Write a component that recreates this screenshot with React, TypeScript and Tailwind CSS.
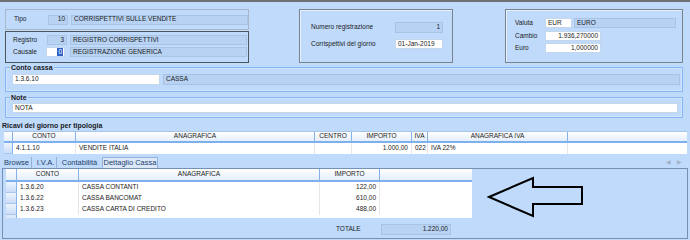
import React from "react";

type FProps = {
  w: number;
  h?: number;
  white?: boolean;
  right?: boolean;
  children?: React.ReactNode;
  extra?: string;
};

function Fld({ w, h = 10, white, right, children, extra = "" }: FProps) {
  return (
    <div
      className={
        "flex items-center px-[2px] border whitespace-nowrap overflow-hidden " +
        (white ? "bg-white border-[#c4d6ec] " : "bg-[#b7d2f2] border-[#a8c3e4] ") +
        (right ? "justify-end " : "justify-start ") +
        extra
      }
      style={{ width: w, height: h }}
    >
      {children}
    </div>
  );
}

function HCell({ w, children, last }: { w: number; children?: React.ReactNode; last?: boolean }) {
  return (
    <div
      className={
        "h-full flex items-center justify-center bg-linear-to-b from-[#ffffff] to-[#e4eefb] border-b-2 border-b-[#7fb0ee] " +
        (last ? "" : "border-r border-r-[#86b2ec]")
      }
      style={{ width: w }}
    >
      {children}
    </div>
  );
}

function RCell({ w, children, right, last }: { w: number; children?: React.ReactNode; right?: boolean; last?: boolean }) {
  return (
    <div
      className={
        "h-full flex items-center px-[3px] bg-white whitespace-nowrap overflow-hidden " +
        (right ? "justify-end " : "justify-start ") +
        (last ? "" : "border-r border-r-[#e6e6e6]")
      }
      style={{ width: w }}
    >
      {children}
    </div>
  );
}

function Ind({ w }: { w: number }) {
  return (
    <div
      className="h-full bg-linear-to-b from-[#eef4fd] to-[#c9dcf6] border-r border-r-[#86b2ec] border-b border-b-[#a9c6ee]"
      style={{ width: w }}
    />
  );
}

export default function App() {
  const g1 = [9, 63, 239, 37, 60, 16, 140, 119];
  const g2 = [11, 62, 241, 60, 92];
  const rows2 = [
    ["1.3.6.20", "CASSA CONTANTI", "122,00"],
    ["1.3.6.22", "CASSA BANCOMAT", "610,00"],
    ["1.3.6.23", "CASSA CARTA DI CREDITO", "488,00"],
  ];
  return (
    <div className="w-[690px] h-[240px] bg-[#bfdafb] overflow-hidden text-[6.5px] leading-none text-[#1b1b1b] font-['Liberation_Sans',Arial,sans-serif]">
      <div className="h-[2px] bg-[#6d7176]" />
      {/* top row */}
      <div className="mt-[7px] pl-[5px] flex items-start">
        <div className="w-[244px] flex flex-col gap-[1px]">
          <div className="h-[21px] border border-[#a8b6c6] flex items-center pl-[8px]">
            <div className="w-[34px]">Tipo</div>
            <Fld w={20} right>10</Fld>
            <div className="w-[3px]" />
            <Fld w={177}>CORRISPETTIVI SULLE VENDITE</Fld>
          </div>
          <div className="h-[32px] border border-[#4e5761] pt-[3px] pl-[7px] flex flex-col gap-[2px]">
            <div className="flex items-center h-[10px]">
              <div className="w-[34px]">Registro</div>
              <Fld w={20} right>3</Fld>
              <div className="w-[3px]" />
              <Fld w={177}>REGISTRO CORRISPETTIVI</Fld>
            </div>
            <div className="flex items-center h-[10px]">
              <div className="w-[33px]">Causale</div>
              <div className="w-[19px] h-[10px] bg-white border border-[#c4d6ec] flex items-center justify-end">
                <span className="bg-[#2f62c8] text-white h-[8px] px-[1px] flex items-center mr-[1px]">0</span>
              </div>
              <div className="w-[5px]" />
              <Fld w={177}>REGISTRAZIONE GENERICA</Fld>
            </div>
          </div>
        </div>
        <div className="ml-[50px] w-[154px] h-[54px] border border-[#79828d] shadow-[inset_1px_1px_0_#e4efff] pl-[11px] pt-[12px] flex flex-col gap-[6px]">
          <div className="flex items-center h-[11px]">
            <div className="w-[84px]">Numero registrazione</div>
            <Fld w={48} h={11} right>1</Fld>
          </div>
          <div className="flex items-center h-[10px]">
            <div className="w-[84px]">Corrispettivi del giorno</div>
            <Fld w={48} white extra="justify-center">01-Jan-2019</Fld>
          </div>
        </div>
        <div className="ml-[52px] w-[178px] h-[54px] border border-[#79828d] shadow-[inset_1px_1px_0_#e4efff] pl-[9px] pt-[8px] flex flex-col">
          <div className="flex items-center h-[10px]">
            <div className="w-[30px]">Valuta</div>
            <Fld w={27} white>EUR</Fld>
            <div className="w-[2px]" />
            <Fld w={102}>EURO</Fld>
          </div>
          <div className="flex items-center h-[10px] mt-[3px]">
            <div className="w-[30px]">Cambio</div>
            <Fld w={56} white right>1.936,270000</Fld>
          </div>
          <div className="flex items-center h-[10px] mt-[2px]">
            <div className="w-[30px]">Euro</div>
            <Fld w={56} white right>1,000000</Fld>
          </div>
        </div>
      </div>

      {/* Conto cassa */}
      <div className="relative mt-[4px] ml-[5px] w-[678px] h-[25px] border border-[#86b5f3] shadow-[inset_0_0_0_1px_#d2e5fd] pl-[6px] pt-[6px] flex items-start gap-[3px]">
        <div className="absolute -top-[4px] left-[4px] px-[1px] bg-[#bfdafb] font-bold text-[7px] leading-[7px]">Conto cassa</div>
        <Fld w={148} h={11} white>1.3.6.10</Fld>
        <Fld w={517} h={11}>CASSA</Fld>
      </div>

      {/* Note */}
      <div className="relative mt-[5px] ml-[5px] w-[678px] h-[21px] border border-[#86b5f3] shadow-[inset_0_0_0_1px_#d2e5fd] pl-[6px] pt-[5px]">
        <div className="absolute -top-[4px] left-[4px] px-[1px] bg-[#bfdafb] font-bold text-[7px] leading-[7px]">Note</div>
        <Fld w={666} white>NOTA</Fld>
      </div>

      <div className="mt-[3px] ml-[2px] h-[9px] flex items-center font-bold text-[7px]">Ricavi del giorno per tipologia</div>

      {/* Grid 1 */}
      <div className="mt-[1px] ml-[4px] w-[683px] border-t border-[#a9c5ea]">
        <div className="flex h-[11px]">
          <HCell w={g1[0]} />
          <HCell w={g1[1]}>CONTO</HCell>
          <HCell w={g1[2]}>ANAGRAFICA</HCell>
          <HCell w={g1[3]}>CENTRO</HCell>
          <HCell w={g1[4]}>IMPORTO</HCell>
          <HCell w={g1[5]}>IVA</HCell>
          <HCell w={g1[6]}>ANAGRAFICA IVA</HCell>
          <HCell w={g1[7]} last />
        </div>
        <div className="flex h-[11px]">
          <Ind w={g1[0]} />
          <RCell w={g1[1]}>4.1.1.10</RCell>
          <RCell w={g1[2]}>VENDITE ITALIA</RCell>
          <RCell w={g1[3]} />
          <RCell w={g1[4]} right>1.000,00</RCell>
          <RCell w={g1[5]}>022</RCell>
          <RCell w={g1[6]}>IVA 22%</RCell>
          <RCell w={g1[7]} last />
        </div>
      </div>

      {/* Tabs */}
      <div className="mt-[3px] h-[11px] flex items-end text-[7.5px] text-[#23406a]">
        <div className="ml-[2px] w-[30px] h-[11px] flex items-center justify-center border-r border-[#94b2d6]">Browse</div>
        <div className="w-[25px] h-[11px] flex items-center justify-center border-r border-[#94b2d6] pl-[3px]">I.V.A.</div>
        <div className="w-[45px] h-[11px] flex items-center justify-center">Contabilità</div>
        <div className="w-[56px] h-[11px] flex items-center justify-center bg-[#dbe8fa] border border-b-0 border-[#93b4dc]">Dettaglio Cassa</div>
        <div className="flex-1" />
        <div className="flex gap-[6px] mr-[8px] mb-[3px] text-[#a3b3c6] text-[6px]">
          <span>◀</span>
          <span>▶</span>
        </div>
      </div>

      {/* Panel */}
      <div className="ml-[2px] w-[686px] h-[71px] border border-[#7490b4] pl-[3px]">
        <div className="flex items-start">
          <div className="w-[466px] h-[49px] bg-white flex flex-col">
            <div className="flex h-[13px]">
              <HCell w={g2[0]} />
              <HCell w={g2[1]}>CONTO</HCell>
              <HCell w={g2[2]}>ANAGRAFICA</HCell>
              <HCell w={g2[3]}>IMPORTO</HCell>
              <HCell w={g2[4]} last />
            </div>
            {rows2.map((r) => (
              <div key={r[0]} className="flex h-[11px]">
                <Ind w={g2[0]} />
                <RCell w={g2[1]}>{r[0]}</RCell>
                <RCell w={g2[2]}>{r[1]}</RCell>
                <RCell w={g2[3]} right>{r[2]}</RCell>
                <RCell w={g2[4]} last />
              </div>
            ))}
            <div className="flex h-[3px]">
              <div className="w-[11px] h-full bg-[#dde9f9] border-r border-r-[#86b2ec]" />
            </div>
          </div>
          <svg width="110" height="46" viewBox="0 0 110 46" className="ml-[8px] mt-[4px]">
            <polygon
              points="9,24 53,5 53,14 102,14 102,31 53,31 53,43"
              fill="none"
              stroke="#000"
              strokeWidth="2"
              strokeLinejoin="miter"
            />
          </svg>
        </div>
        <div className="mt-[5px] flex items-center h-[11px]">
          <div className="ml-[330px] w-[45px]">TOTALE</div>
          <Fld w={70} h={11} right>1.220,00</Fld>
        </div>
      </div>
    </div>
  );
}
